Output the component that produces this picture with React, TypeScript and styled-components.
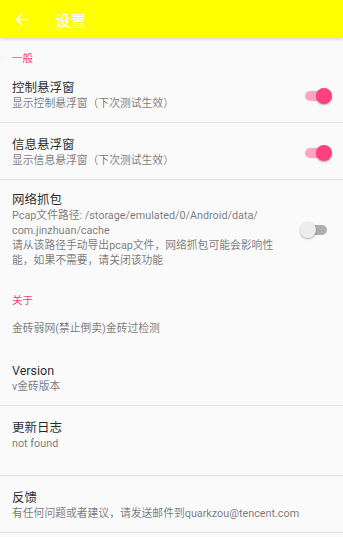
import React, { useState } from 'react';
import styled, { createGlobalStyle } from 'styled-components';

const GlobalStyle = createGlobalStyle`
    html, body {
        margin: 0;
        padding: 0;
        background-color: #fafafa;
    }
    body {
        font-family: Roboto, "Noto Sans CJK SC", "Noto Sans", sans-serif;
        -webkit-font-smoothing: antialiased;
    }
`;

const Page = styled.div`
    display: flex;
    flex-direction: column;
    width: 100%;
    min-height: 537px;
    background-color: #fafafa;
`;

const Toolbar = styled.header`
    display: flex;
    align-items: center;
    height: 38px;
    padding-left: 11px;
    background-color: #ffff00;
    box-shadow: 0 1px 3px rgba(0, 0, 0, 0.18);
    position: relative;
    z-index: 1;
`;

const BackButton = styled.button`
    display: flex;
    align-items: center;
    justify-content: center;
    width: 20px;
    height: 20px;
    padding: 0;
    border: none;
    background: none;
    cursor: pointer;
`;

const ToolbarTitle = styled.h1`
    margin: 0 0 0 24px;
    font-size: 15px;
    font-weight: 500;
    color: #ffffff;
    letter-spacing: 0.5px;
`;

const Category = styled.div`
    padding: 14px 12px 0;
    font-size: 10.5px;
    line-height: 14px;
    color: #ff4081;
`;

const Row = styled.div<{ $divider?: boolean; $pt?: number; $pb?: number }>`
    display: flex;
    align-items: center;
    padding: ${(p) => p.$pt ?? 14}px 11px ${(p) => p.$pb ?? 11}px 12px;
    border-bottom: ${(p) => (p.$divider ? '1px solid #e5e5e5' : 'none')};
`;

const TextBlock = styled.div<{ $maxWidth?: number }>`
    flex: 1;
    min-width: 0;
    max-width: ${(p) => (p.$maxWidth ? `${p.$maxWidth}px` : 'none')};
`;

const Title = styled.div`
    font-size: 12.5px;
    line-height: 16px;
    font-weight: 400;
    color: rgba(0, 0, 0, 0.85);
`;

const Summary = styled.div`
    font-size: 10.8px;
    line-height: 15px;
    color: rgba(0, 0, 0, 0.54);
`;

const SwitchWrap = styled.button`
    position: relative;
    flex-shrink: 0;
    width: 32px;
    height: 16px;
    margin-left: auto;
    padding: 0;
    border: none;
    background: none;
    cursor: pointer;
`;

const Track = styled.span<{ $on: boolean }>`
    position: absolute;
    left: 5px;
    right: 5px;
    top: 3px;
    height: 10px;
    border-radius: 5px;
    background-color: ${(p) => (p.$on ? 'rgba(255, 64, 129, 0.45)' : 'rgba(0, 0, 0, 0.3)')};
`;

const Thumb = styled.span<{ $on: boolean }>`
    position: absolute;
    top: 0;
    left: ${(p) => (p.$on ? 16 : 0)}px;
    width: 16px;
    height: 16px;
    border-radius: 50%;
    background-color: ${(p) => (p.$on ? '#ff4081' : '#ededed')};
    box-shadow: 0 1px 2px rgba(0, 0, 0, 0.3);
`;

const Switch: React.FC<{ on: boolean; onToggle: () => void }> = ({ on, onToggle }) => (
    <SwitchWrap onClick={onToggle}>
        <Track $on={on} />
        <Thumb $on={on} />
    </SwitchWrap>
);

const App: React.FC = () => {
    const [ctrl, setCtrl] = useState(true);
    const [info, setInfo] = useState(true);
    const [pcap, setPcap] = useState(false);

    return (
        <>
            <GlobalStyle />
            <Page>
                <Toolbar>
                    <BackButton>
                        <svg width="19" height="19" viewBox="0 0 24 24" fill="#ffffff">
                            <path d="M20 11H7.83l5.59-5.59L12 4l-8 8 8 8 1.41-1.41L7.83 13H20v-2z" />
                        </svg>
                    </BackButton>
                    <ToolbarTitle>设置</ToolbarTitle>
                </Toolbar>

                <Category>一般</Category>
                <Row $divider>
                    <TextBlock>
                        <Title>控制悬浮窗</Title>
                        <Summary>显示控制悬浮窗（下次测试生效）</Summary>
                    </TextBlock>
                    <Switch on={ctrl} onToggle={() => setCtrl(!ctrl)} />
                </Row>
                <Row $divider>
                    <TextBlock>
                        <Title>信息悬浮窗</Title>
                        <Summary>显示信息悬浮窗（下次测试生效）</Summary>
                    </TextBlock>
                    <Switch on={info} onToggle={() => setInfo(!info)} />
                </Row>
                <Row $pt={12} $pb={12}>
                    <TextBlock $maxWidth={268}>
                        <Title>网络抓包</Title>
                        <Summary>
                            Pcap文件路径: /storage/emulated/0/Android/data/
                            <br />
                            com.jinzhuan/cache
                            <br />
                            请从该路径手动导出pcap文件，网络抓包可能会影响性能，如果不需要，请关闭该功能
                        </Summary>
                    </TextBlock>
                    <Switch on={pcap} onToggle={() => setPcap(!pcap)} />
                </Row>

                <Category>关于</Category>
                <Row $pt={13} $pb={13}>
                    <TextBlock>
                        <Summary>金砖弱网(禁止倒卖)金砖过检测</Summary>
                    </TextBlock>
                </Row>
                <Row $divider>
                    <TextBlock>
                        <Title>Version</Title>
                        <Summary>v金砖版本</Summary>
                    </TextBlock>
                </Row>
                <Row $divider $pb={24}>
                    <TextBlock>
                        <Title>更新日志</Title>
                        <Summary>not found</Summary>
                    </TextBlock>
                </Row>
                <Row $divider>
                    <TextBlock>
                        <Title>反馈</Title>
                        <Summary>有任何问题或者建议，请发送邮件到quarkzou@tencent.com</Summary>
                    </TextBlock>
                </Row>
            </Page>
        </>
    );
};

export default App;
